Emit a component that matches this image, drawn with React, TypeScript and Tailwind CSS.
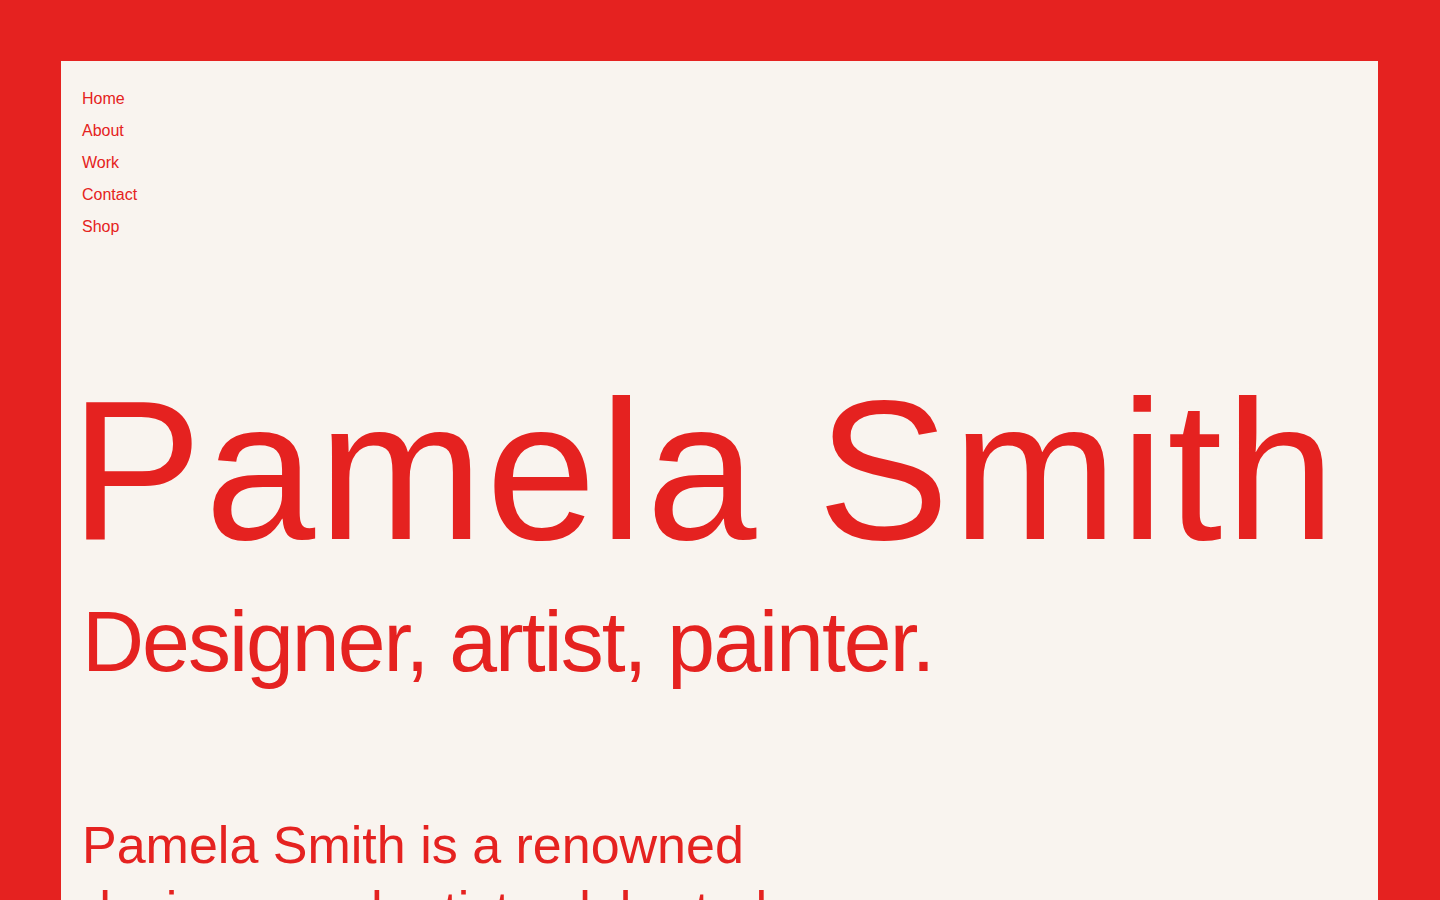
export default function App() {
  const links = ["Home", "About", "Work", "Contact", "Shop"];

  return (
    <div className="min-h-screen bg-[#e52220] pt-[61px] pl-[61px] pr-[62px] font-['Liberation_Sans',Arial,sans-serif] text-[#e52220]">
      <div className="min-h-[1200px] bg-[#f9f4ef] px-[21px] pt-[22px]">
        <nav className="flex flex-col">
          {links.map((link) => (
            <a key={link} href="#" className="text-[16px] leading-[32px]">
              {link}
            </a>
          ))}
        </nav>
        <h1 className="mt-[129px] -ml-[12px] text-[198px] leading-[1] tracking-[3px] whitespace-nowrap">
          Pamela Smith
        </h1>
        <p className="mt-[28px] text-[86px] leading-[1] tracking-[-2px]">
          Designer, artist, painter.
        </p>
        <p className="mt-[129px] max-w-[720px] text-[52px] leading-[1.25]">
          Pamela Smith is a renowned designer and artist celebrated
        </p>
      </div>
    </div>
  );
}
